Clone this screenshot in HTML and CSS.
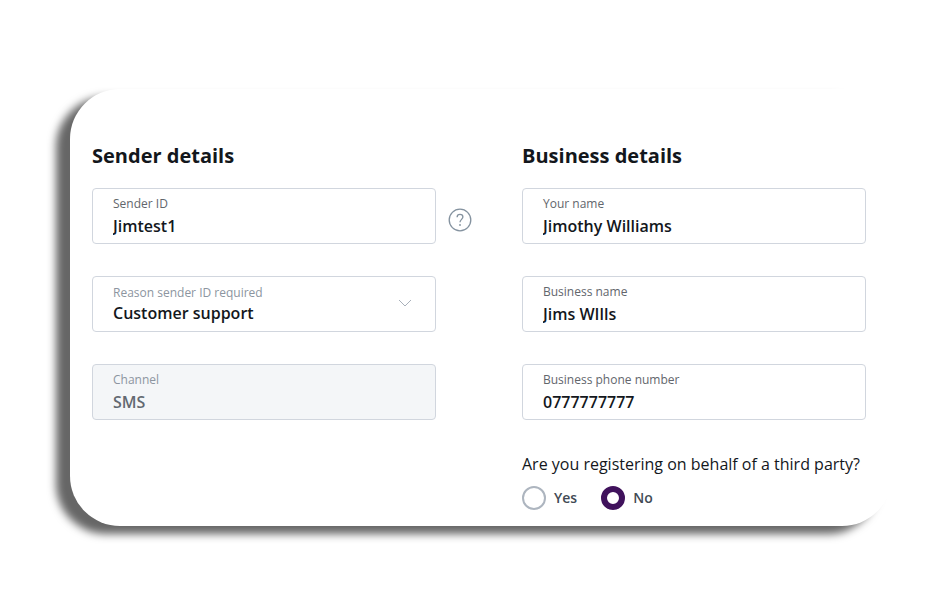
FILE: index.html
```html
<!DOCTYPE html>
<html lang="en">
    <head>
        <meta charset="utf-8" />
        <meta name="viewport" content="width=device-width, initial-scale=1" />
        <title>Sender ID registration</title>
        <link rel="stylesheet" href="styles.css">
    </head>
    <body>
        <form class="card">
            <section class="sender">
                <h2>Sender details</h2>
                <div class="row">
                    <div class="field">
                        <label for="sender-id">Sender ID</label>
                        <input type="text" id="sender-id" name="senderId" value="Jimtest1" />
                    </div>
                    <button type="button" class="help" aria-label="Help">
                        <svg width="24" height="24" viewBox="0 0 24 24" fill="none" stroke="currentColor">
                            <circle cx="12" cy="12" r="10.8" stroke-width="1.3" />
                            <path d="M9.1 9.2C9.1 7.3 10.3 6.4 12 6.4S14.9 7.4 14.9 9C14.9 11.2 12 11.6 12 14.3" stroke-width="1.3" />
                            <circle cx="12" cy="17" r="0.9" fill="currentColor" stroke="none" />
                        </svg>
                    </button>
                </div>
                <div class="row">
                    <div class="field field-select">
                        <label for="reason">Reason sender ID required</label>
                        <select id="reason" name="reason">
                            <option selected>Customer support</option>
                            <option>Marketing</option>
                            <option>Notifications</option>
                        </select>
                        <svg class="chevron" width="14" height="8" viewBox="0 0 14 8" fill="none" stroke="currentColor">
                            <path d="M1 1L7 7L13 1" />
                        </svg>
                    </div>
                </div>
                <div class="row">
                    <div class="field field-disabled">
                        <label for="channel">Channel</label>
                        <input type="text" id="channel" name="channel" value="SMS" disabled />
                    </div>
                </div>
            </section>

            <section class="business">
                <h2>Business details</h2>
                <div class="field">
                    <label for="your-name">Your name</label>
                    <input type="text" id="your-name" name="yourName" value="Jimothy Williams" />
                </div>
                <div class="field">
                    <label for="business-name">Business name</label>
                    <input type="text" id="business-name" name="businessName" value="Jims WIlls" />
                </div>
                <div class="field">
                    <label for="phone">Business phone number</label>
                    <input type="tel" id="phone" name="phone" value="0777777777" />
                </div>
                <fieldset class="third-party">
                    <legend>Are you registering on behalf of a third party?</legend>
                    <div class="options">
                        <label><input type="radio" name="thirdParty" value="yes" />Yes</label>
                        <label><input type="radio" name="thirdParty" value="no" checked />No</label>
                    </div>
                </fieldset>
            </section>
        </form>
    </body>
</html>
```

FILE: styles.css
```css
* {
    box-sizing: border-box;
}

body {
    margin: 0;
    padding: 89px 50px 71px 70px;
    background-color: #fff;
    color: #13171c;
    font-family: "Open Sans", "Noto Sans", sans-serif;
    font-size: 16px;
}

.card {
    display: flex;
    gap: 50px;
    padding: 53px 26px 16px 22px;
    border-radius: 50px;
    background-color: #fff;
    box-shadow: -14px 8px 8px #666;
}

/* the sender column is wider by the help button and its gap */
.sender {
    flex: 1 1 36px;
    min-width: 0;
}

.business {
    flex: 1 1 0;
    min-width: 0;
}

h2 {
    margin: 0 0 18px;
    font-size: 20px;
    line-height: 28px;
    font-weight: 700;
}

.row {
    display: grid;
    grid-template-columns: 1fr 24px;
    align-items: center;
    gap: 12px;
}

.row,
.business .field {
    margin-bottom: 32px;
}

/* fields */

.field {
    position: relative;
    height: 56px;
    padding: 6px 20px;
    border: 1px solid #d1d6de;
    border-radius: 4px;
}

.field label {
    display: block;
    color: #62666c;
    font-size: 12px;
    line-height: 18px;
}

.field input,
.field select {
    display: block;
    width: 100%;
    height: 26px;
    margin: 0;
    padding: 0;
    border: 0;
    outline: 0;
    background: none;
    color: #13171c;
    font-family: inherit;
    font-size: 16px;
    font-weight: 600;
}

.field select {
    height: 22px;
    appearance: none;
    -webkit-appearance: none;
}

.field-select {
    padding-top: 7px;
}

.field-select label,
.field-disabled label {
    color: #8c95a0;
}

.field-disabled {
    background-color: #f4f6f8;
}

.field-disabled input {
    color: #626971;
}

.chevron {
    position: absolute;
    top: 22px;
    right: 23px;
    color: #a9b1bb;
    pointer-events: none;
}

.help {
    display: block;
    width: 24px;
    height: 32px;
    margin: 0;
    padding: 8px 0 0;
    border: 0;
    background: none;
    color: #84929f;
    cursor: pointer;
}

.help svg {
    display: block;
}

/* third party question */

.third-party {
    margin: 0;
    padding: 0;
    border: 0;
}

.third-party legend {
    padding: 0;
    line-height: 24px;
}

.options {
    display: flex;
    gap: 24px;
    padding-top: 10px;
}

.options label {
    display: flex;
    align-items: center;
    gap: 8px;
    color: #424a54;
    font-size: 14px;
    line-height: 24px;
    font-weight: 600;
}

.options input {
    appearance: none;
    -webkit-appearance: none;
    width: 24px;
    height: 24px;
    margin: 0;
    border: 2px solid #adb5bf;
    border-radius: 50%;
    background-color: #fff;
}

.options input:checked {
    border: 6px solid #40125c;
}
```
